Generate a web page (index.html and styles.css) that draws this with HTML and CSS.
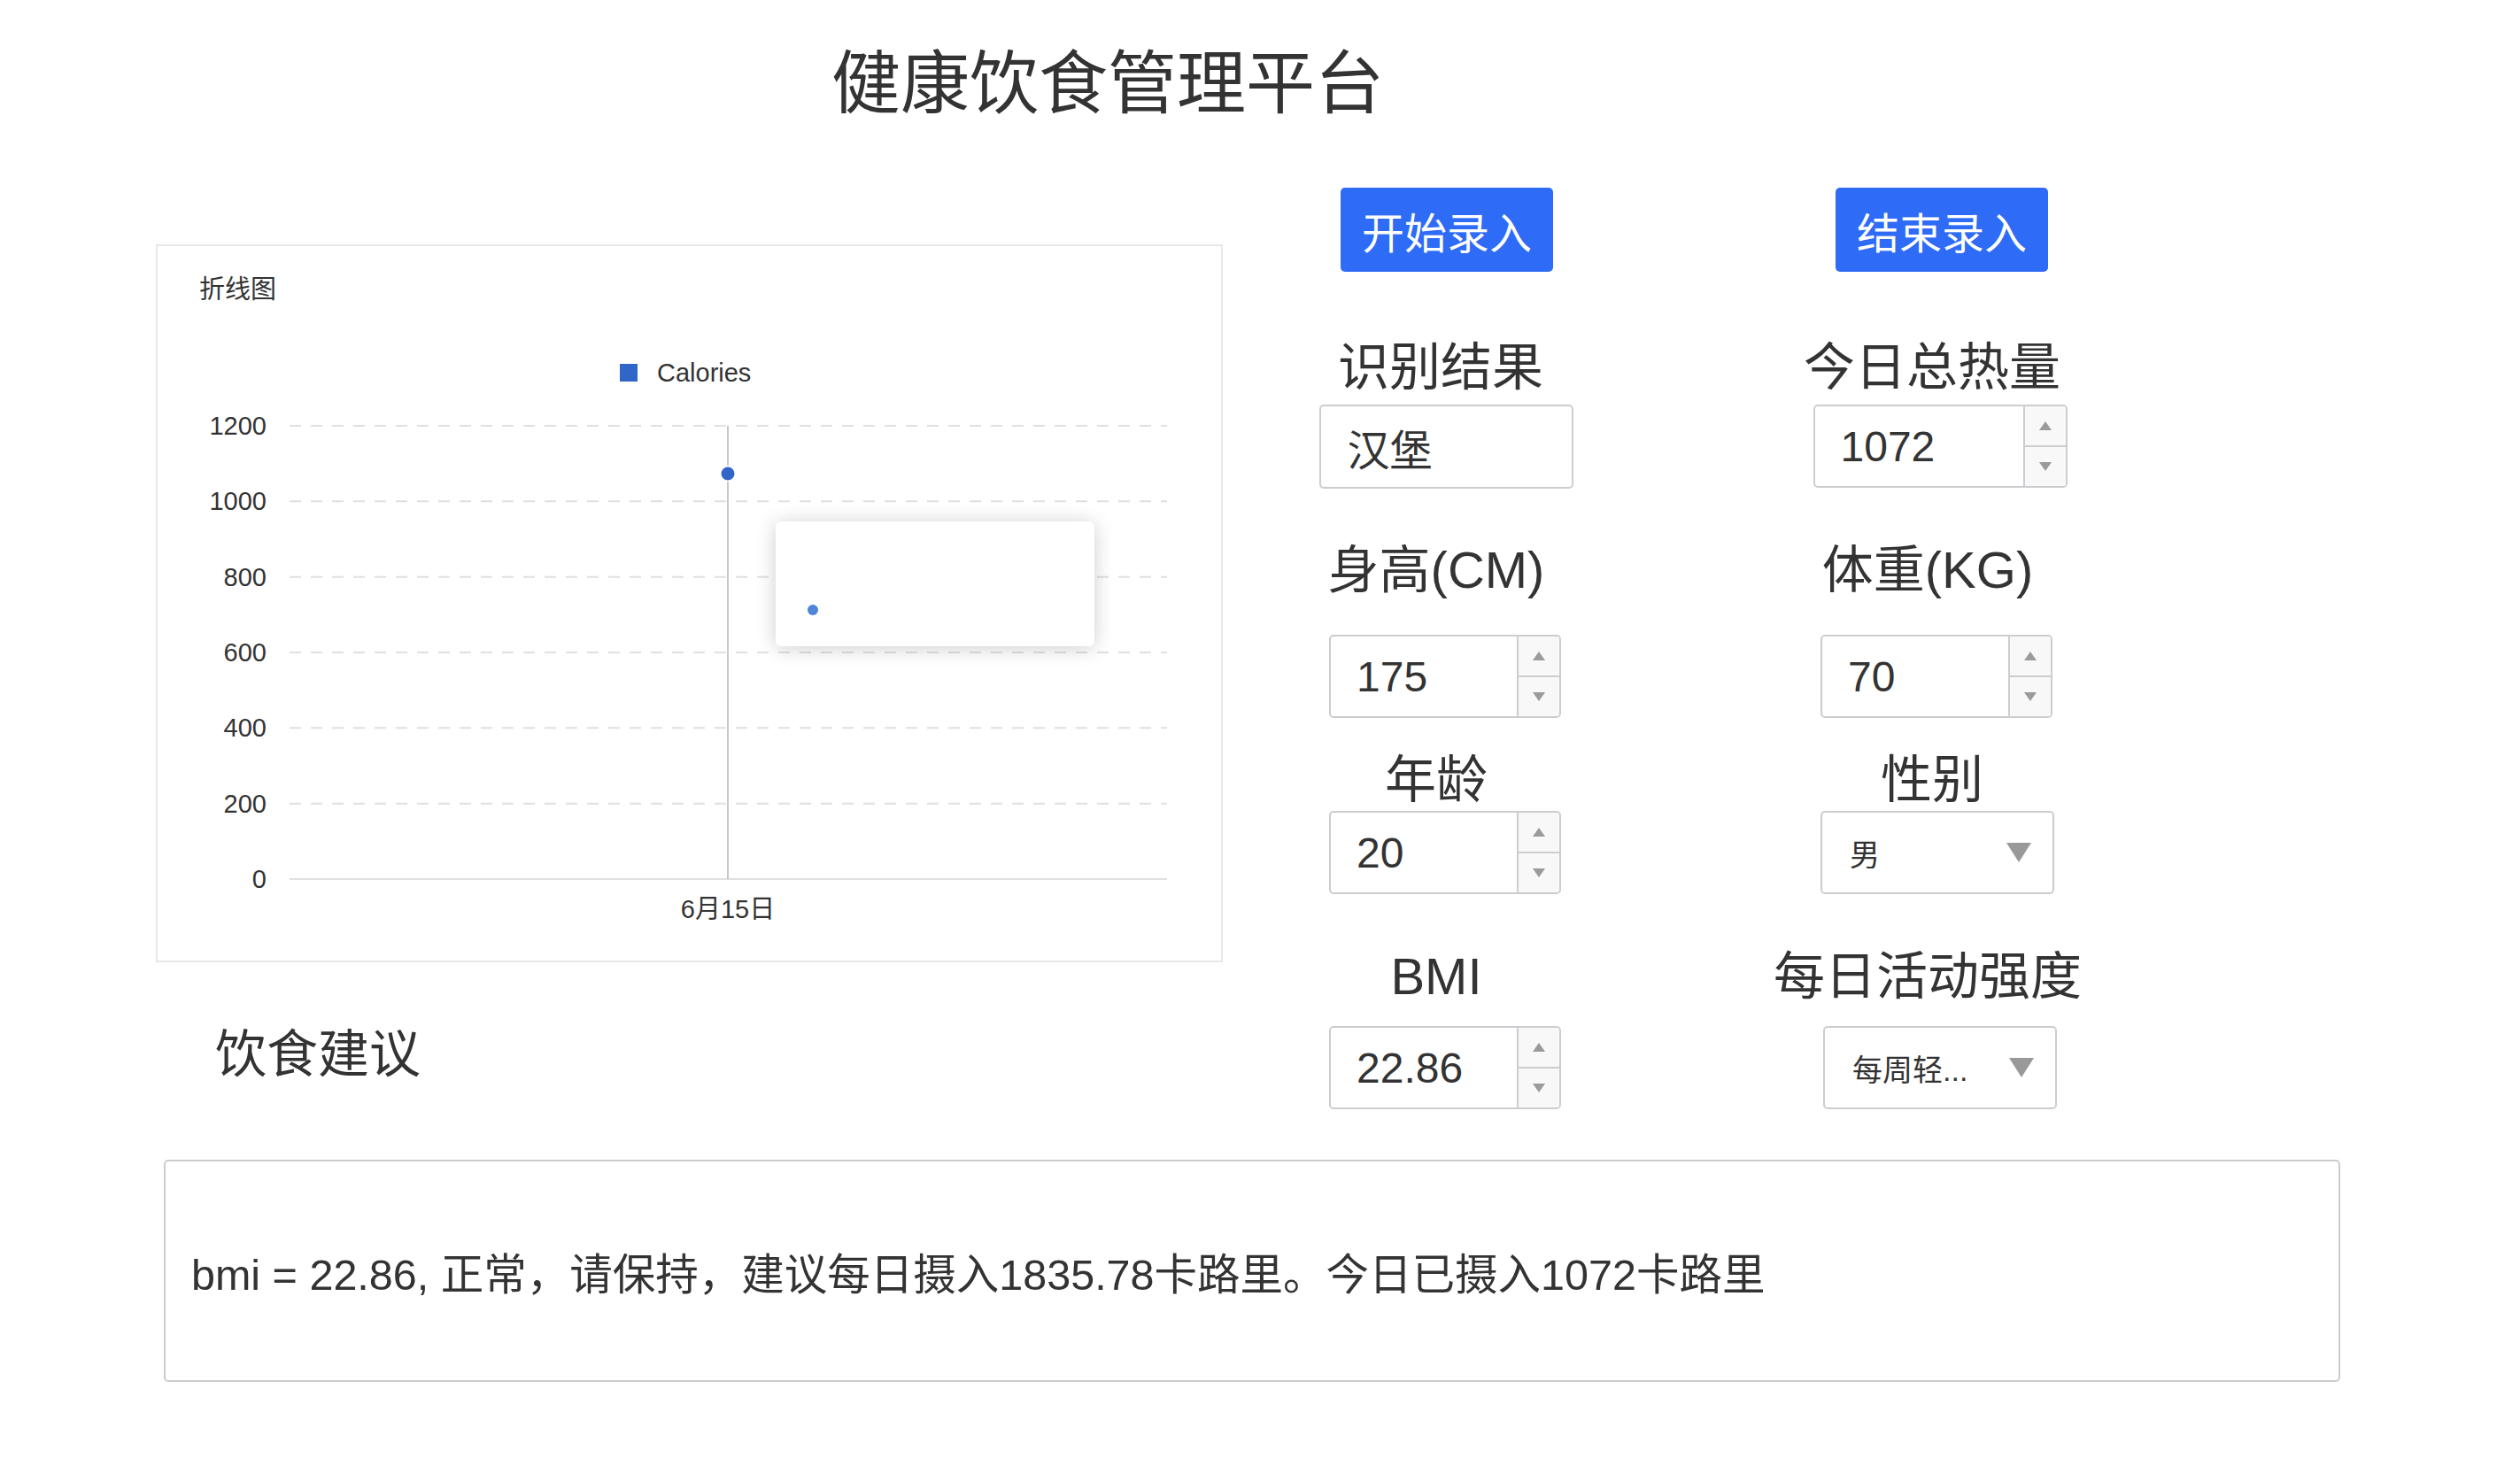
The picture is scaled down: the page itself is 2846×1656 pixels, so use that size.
FILE: index.html
```html
<!DOCTYPE html>
<html lang="zh-CN">
<head>
<meta charset="utf-8">
<title>健康饮食管理平台</title>
<link rel="stylesheet" href="styles.css">
</head>
<body>
<div class="page">
  <h1 class="title">健康饮食管理平台</h1>
  <div class="main">
    <div class="left">
      <div class="chart-box">
        <svg class="chart-svg" width="1201" height="807" viewBox="0 0 1201 807">
          <text class="chart-title" x="47" y="59">折线图</text>
          <rect x="522" y="133" width="20" height="20" class="legend-icon"/>
          <text x="564" y="153">Calories</text>
          <g class="grid">
            <line x1="149" y1="203" x2="1140" y2="203"/>
            <line x1="149" y1="288.3" x2="1140" y2="288.3"/>
            <line x1="149" y1="373.7" x2="1140" y2="373.7"/>
            <line x1="149" y1="459" x2="1140" y2="459"/>
            <line x1="149" y1="544.3" x2="1140" y2="544.3"/>
            <line x1="149" y1="629.7" x2="1140" y2="629.7"/>
          </g>
          <line class="axis" x1="149" y1="715" x2="1140" y2="715"/>
          <g class="y-labels">
            <text x="123" y="213">1200</text>
            <text x="123" y="298">1000</text>
            <text x="123" y="384">800</text>
            <text x="123" y="469">600</text>
            <text x="123" y="554">400</text>
            <text x="123" y="640">200</text>
            <text x="123" y="725">0</text>
          </g>
          <line class="pointer" x1="644" y1="203" x2="644" y2="715"/>
          <circle class="point" cx="644" cy="257" r="8.5"/>
          <text class="x-label" x="644" y="759">6月15日</text>
        </svg>
        <div class="tooltip"><span class="tip-dot"></span></div>
      </div>
      <h2 class="advice-title">饮食建议</h2>
    </div>

    <div class="form">
      <div class="field"><button class="btn">开始录入</button></div>
      <div class="field"><button class="btn btn-end">结束录入</button></div>

      <div class="field r2">
        <div class="label nudge">识别结果</div>
        <div class="text-input">汉堡</div>
      </div>
      <div class="field r2">
        <div class="label nudge">今日总热量</div>
        <div class="num-input wide"><span class="value">1072</span><div class="spin"><span class="up"></span><span class="down"></span></div></div>
      </div>

      <div class="field r3">
        <div class="label">身高(CM)</div>
        <div class="num-input"><span class="value">175</span><div class="spin"><span class="up"></span><span class="down"></span></div></div>
      </div>
      <div class="field r3">
        <div class="label">体重(KG)</div>
        <div class="num-input"><span class="value">70</span><div class="spin"><span class="up"></span><span class="down"></span></div></div>
      </div>

      <div class="field r4">
        <div class="label">年龄</div>
        <div class="num-input"><span class="value">20</span><div class="spin"><span class="up"></span><span class="down"></span></div></div>
      </div>
      <div class="field r4">
        <div class="label nudge">性别</div>
        <div class="select"><span>男</span><span class="caret"></span></div>
      </div>

      <div class="field r5">
        <div class="label">BMI</div>
        <div class="num-input"><span class="value">22.86</span><div class="spin"><span class="up"></span><span class="down"></span></div></div>
      </div>
      <div class="field r5">
        <div class="label">每日活动强度</div>
        <div class="select shifted"><span>每周轻...</span><span class="caret"></span></div>
      </div>
    </div>
  </div>

  <div class="advice-box">bmi = 22.86, 正常，请保持，建议每日摄入1835.78卡路里。今日已摄入1072卡路里</div>
</div>
</body>
</html>
```

FILE: styles.css
```css
html, body {
  margin: 0;
  padding: 0;
  background: #ffffff;
}

body {
  font-family: "Liberation Sans", "Noto Sans CJK SC", sans-serif;
  color: #333333;
}

.page {
  width: 2846px;
}

.title {
  margin: 0;
  padding-top: 48px;
  width: 2502px;
  text-align: center;
  font-size: 78px;
  line-height: 94px;
  font-weight: normal;
  color: #333333;
}

.main {
  display: flex;
  align-items: flex-start;
  margin-top: -3px;
}

.left {
  margin-left: 176px;
  padding-top: 137px;
  width: 1205px;
}

.chart-box {
  position: relative;
  width: 1205px;
  height: 811px;
  box-sizing: border-box;
  border: 2px solid #e8e8e8;
}

.chart-svg {
  display: block;
}

.chart-svg text {
  font-family: "Liberation Sans", "Noto Sans CJK SC", sans-serif;
  font-size: 29px;
  fill: #333333;
}

.legend-icon {
  fill: #2f66c8;
}

.grid line {
  stroke: #e0e0e0;
  stroke-width: 2;
  stroke-dasharray: 13 11;
}

.axis {
  stroke: #e0e0e0;
  stroke-width: 2;
}

.y-labels text {
  text-anchor: end;
}

.pointer {
  stroke: #b4b4b4;
  stroke-width: 1.5;
}

.point {
  fill: #2f66c8;
  stroke: #ffffff;
  stroke-width: 2;
}

.chart-svg .x-label {
  text-anchor: middle;
}

.tooltip {
  position: absolute;
  left: 698px;
  top: 311px;
  width: 360px;
  height: 141px;
  background: #ffffff;
  border-radius: 6px;
  box-shadow: 0 2px 22px rgba(0, 0, 0, 0.2);
}

.tip-dot {
  position: absolute;
  left: 36px;
  top: 94px;
  width: 12px;
  height: 12px;
  border-radius: 50%;
  background: #4f86db;
}

.advice-title {
  margin: 69px 0 0 67px;
  font-size: 58px;
  line-height: 70px;
  font-weight: normal;
  color: #333333;
}

.form {
  margin-left: 41px;
  margin-top: 73px;
  display: grid;
  grid-template-columns: 400px 400px;
  column-gap: 155px;
}

.field {
  display: flex;
  flex-direction: column;
  align-items: center;
}

.label {
  font-size: 58px;
  line-height: 70px;
  white-space: nowrap;
}

.label.nudge {
  padding-left: 10px;
}

.r2 { margin-top: 73px; }
.r2 .label { margin-bottom: 7px; }
.r3 { margin-top: 57px; }
.r3 .label { margin-bottom: 38px; }
.r4 { margin-top: 35px; }
.r4 .label { margin-bottom: 0; }
.r5 { margin-top: 58px; }
.r5 .label { margin-bottom: 21px; }

.btn {
  width: 240px;
  height: 95px;
  margin-left: 24px;
  border: none;
  border-radius: 5px;
  background: #2e6bf6;
  color: #ffffff;
  font-family: "Liberation Sans", "Noto Sans CJK SC", sans-serif;
  font-size: 48px;
  padding: 0;
}

.btn.btn-end {
  margin-left: 32px;
}

.text-input {
  width: 287px;
  height: 95px;
  box-sizing: border-box;
  border: 2px solid #cdcdd1;
  border-radius: 5px;
  display: flex;
  align-items: center;
  padding-left: 30px;
  font-size: 48px;
  margin-left: 22px;
}

.num-input {
  display: flex;
  width: 262px;
  height: 94px;
  box-sizing: border-box;
  border: 2px solid #cdcdd1;
  border-radius: 5px;
  font-size: 48px;
  margin-left: 20px;
}

.num-input.wide {
  width: 287px;
  margin-left: 28px;
}

.value {
  flex: 1;
  display: flex;
  align-items: center;
  padding-left: 29px;
}

.spin {
  width: 46px;
  display: flex;
  flex-direction: column;
  border-left: 2px solid #cdcdd1;
  background: #f8f8f8;
  border-radius: 0 3px 3px 0;
}

.spin span {
  flex: 1;
  display: flex;
  align-items: center;
  justify-content: center;
}

.spin span + span {
  border-top: 2px solid #cdcdd1;
}

.up::before {
  content: "";
  border-left: 7px solid transparent;
  border-right: 7px solid transparent;
  border-bottom: 10px solid #9b9b9b;
}

.down::before {
  content: "";
  border-left: 7px solid transparent;
  border-right: 7px solid transparent;
  border-top: 10px solid #9b9b9b;
}

.select {
  width: 264px;
  height: 94px;
  box-sizing: border-box;
  border: 2px solid #cdcdd1;
  border-radius: 5px;
  display: flex;
  align-items: center;
  justify-content: space-between;
  padding: 0 24px 0 31px;
  font-size: 34px;
  margin-left: 22px;
}

.select.shifted {
  margin-left: 28px;
}

.caret {
  width: 0;
  height: 0;
  border-left: 14px solid transparent;
  border-right: 14px solid transparent;
  border-top: 22px solid #999999;
}

.advice-box {
  margin: 57px 0 0 185px;
  width: 2458px;
  height: 251px;
  box-sizing: border-box;
  border: 2px solid #cdcdd1;
  border-radius: 5px;
  display: flex;
  align-items: center;
  padding-left: 29px;
  font-size: 48.5px;
  color: #333333;
}
```
